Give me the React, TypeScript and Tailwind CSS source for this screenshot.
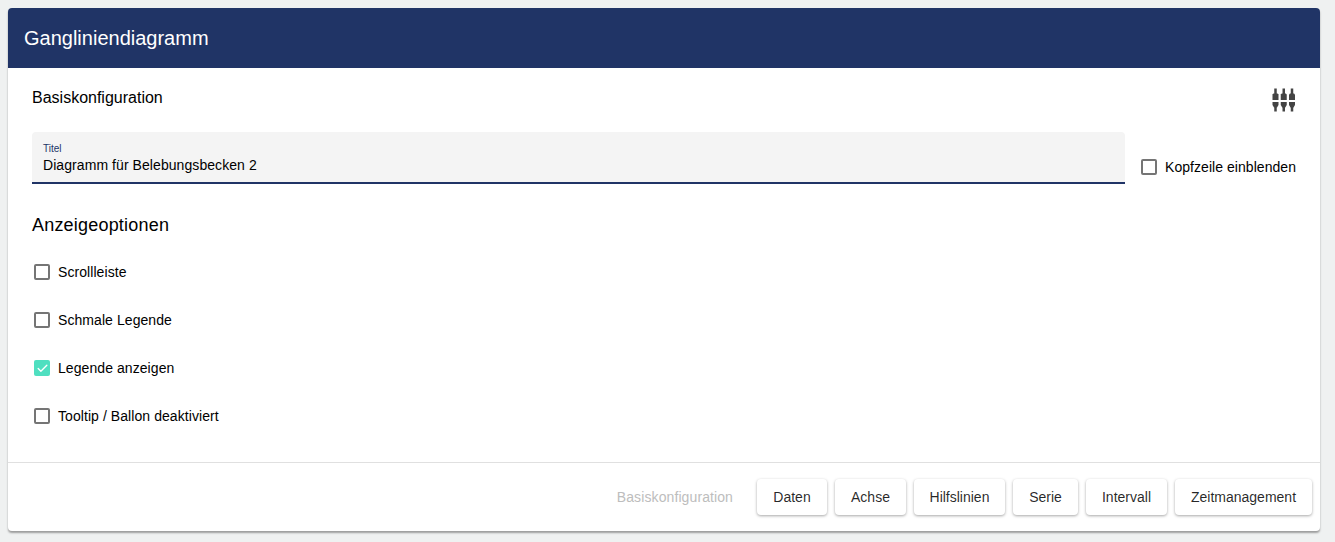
import React from "react";
import { Check } from "lucide-react";

const OPTIONS = [
  { label: "Scrollleiste", checked: false },
  { label: "Schmale Legende", checked: false },
  { label: "Legende anzeigen", checked: true },
  { label: "Tooltip / Ballon deaktiviert", checked: false },
];

const TABS = [
  { label: "Daten", width: "w-[70px]" },
  { label: "Achse", width: "w-[71px]" },
  { label: "Hilfslinien", width: "w-[91px]" },
  { label: "Serie", width: "w-[65px]" },
  { label: "Intervall", width: "w-[81px]" },
  { label: "Zeitmanagement", width: "w-[137px]" },
];

function Box({ checked }: { checked: boolean }) {
  if (checked) {
    return (
      <span className="flex h-4 w-4 items-center justify-center rounded-[2px] bg-[#4fdfc0]">
        <Check className="h-[13px] w-[13px] text-white" strokeWidth={2.5} />
      </span>
    );
  }
  return <span className="h-4 w-4 rounded-[2px] border-2 border-[#757575] bg-white" />;
}

function ConfigIcon() {
  return (
    <svg className="mt-[6px]" width="24" height="24" viewBox="0 0 24 24" fill="#444444">
      {[0.5, 8.75, 17].map((x) => (
        <g key={x}>
          <rect x={x + 1.75} y="0.5" width="2.5" height="6" />
          <path d={`M${x} 12V6.5l1-1h4l1 1V12z`} />
          <path d={`M${x} 14h6v3l-1.5 2.5h-3L${x} 17z`} />
          <rect x={x + 1.75} y="18" width="2.5" height="5.5" />
        </g>
      ))}
    </svg>
  );
}

export default function App() {
  return (
    <div className="h-[542px] bg-[#eff1f1] pt-2 pr-[15px] pl-2 font-['Liberation_Sans',Arial,sans-serif] text-black">
      <div className="flex h-[523px] flex-col rounded-[4px] bg-white shadow-[0_2px_2px_rgba(0,0,0,0.35)]">
        {/* Header */}
        <div className="flex h-[60px] items-center rounded-t-[4px] bg-[#203466] px-4 text-[20px] text-white">
          Gangliniendiagramm
        </div>

        {/* Content */}
        <div className="flex-1 px-6">
          <div className="flex h-[58px] items-center justify-between">
            <span className="mt-[2px] text-[16px]">Basiskonfiguration</span>
            <ConfigIcon />
          </div>

          <div className="mt-[6px] flex items-center">
            <div className="h-[52px] flex-1 rounded-t-[4px] border-b-2 border-[#203466] bg-[#f4f4f4] px-[11px] pt-[11px]">
              <div className="text-[10px] leading-[11px] text-[#203466]">Titel</div>
              <div className="mt-[3px] text-[14px] leading-[16px] tracking-[0.07px]">
                Diagramm für Belebungsbecken 2
              </div>
            </div>
            <label className="mt-[18px] ml-4 flex w-[155px] items-center gap-2 text-[14px] tracking-[0.05px] whitespace-nowrap">
              <Box checked={false} />
              Kopfzeile einblenden
            </label>
          </div>

          <h3 className="mt-[31px] text-[18px] leading-[21px] tracking-[0.2px]">Anzeigeoptionen</h3>

          <div className="mt-3 flex flex-col">
            {OPTIONS.map((option) => (
              <label
                key={option.label}
                className="flex h-12 items-center gap-2 pl-[2px] text-[14px] tracking-[0.07px]"
              >
                <Box checked={option.checked} />
                {option.label}
              </label>
            ))}
          </div>
        </div>

        {/* Footer */}
        <div className="flex h-[69px] items-start justify-end gap-2 border-t border-[#e0e0e0] pt-4 pr-2">
          <span className="px-4 text-[14px] leading-9 tracking-[0.1px] text-[#bdbdbd]">Basiskonfiguration</span>
          {TABS.map((tab) => (
            <button
              key={tab.label}
              className={`${tab.width} h-9 rounded-[4px] bg-white text-[14px] text-black/85 shadow-[0_1px_3px_rgba(0,0,0,0.35)]`}
            >
              {tab.label}
            </button>
          ))}
        </div>
      </div>
    </div>
  );
}
